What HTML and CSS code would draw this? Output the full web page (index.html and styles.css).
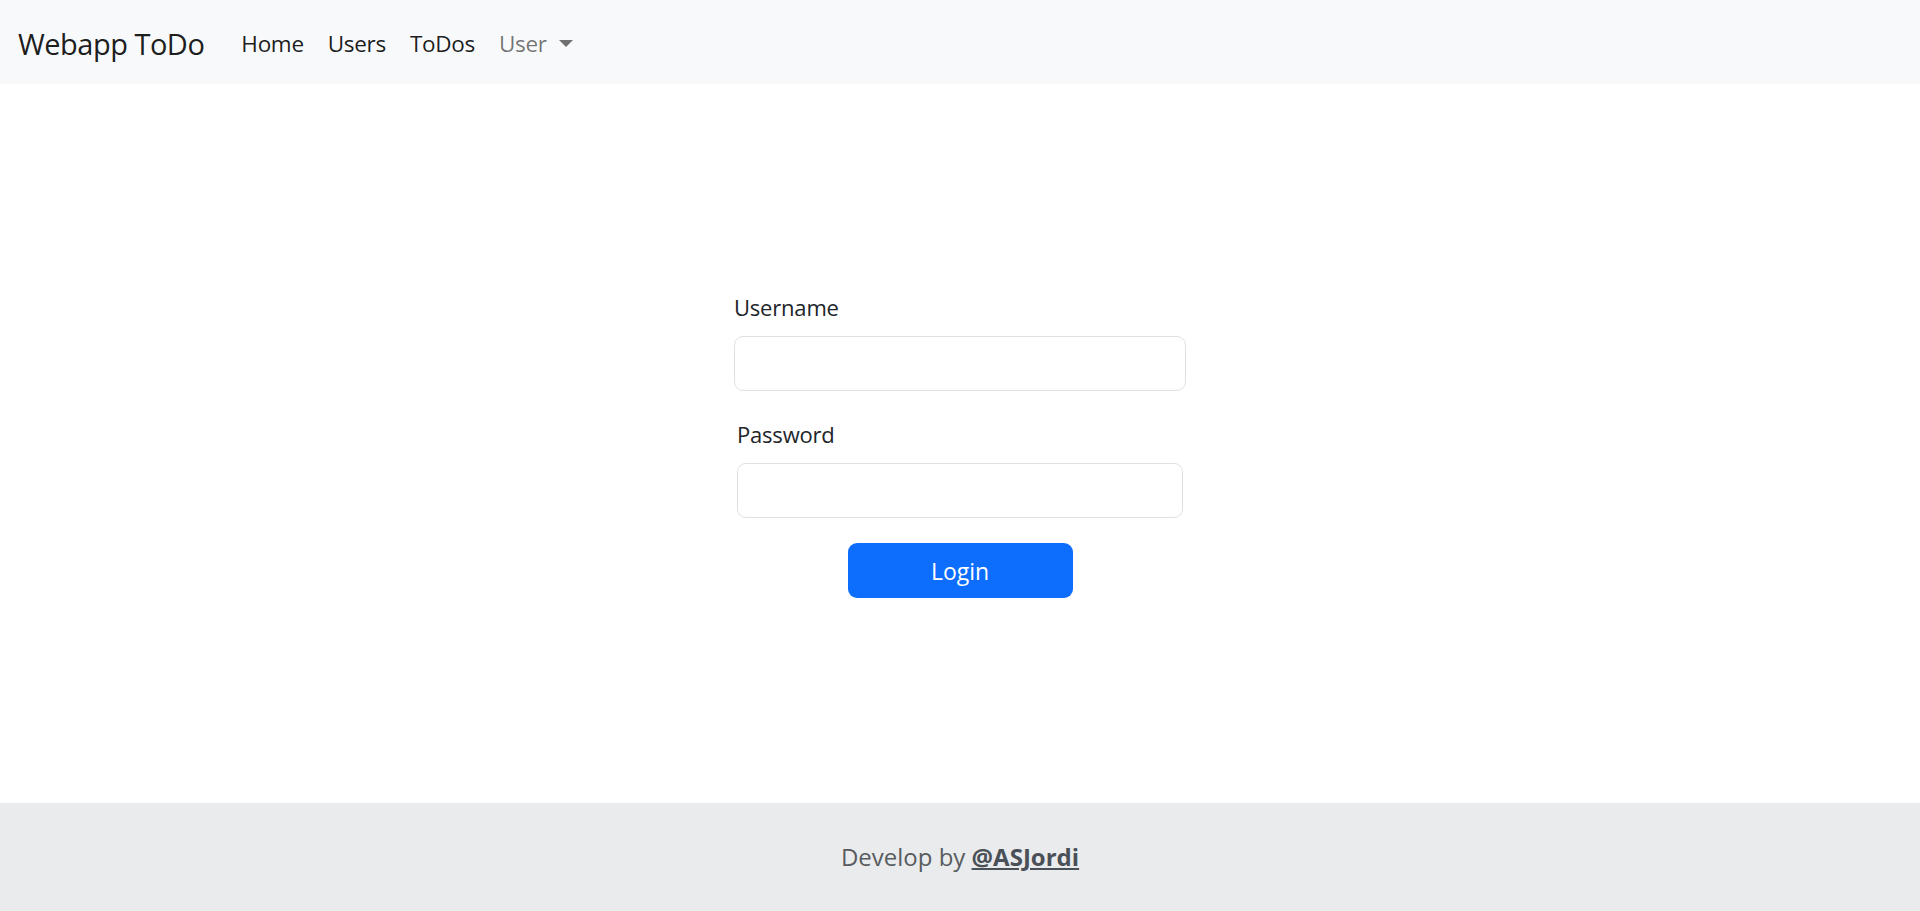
FILE: index.html
```html
<!DOCTYPE html>
<html lang="en">
<head>
<meta charset="utf-8">
<title>Webapp ToDo</title>
<link rel="stylesheet" href="styles.css">
</head>
<body>
<nav class="navbar">
  <a class="brand" href="#">Webapp ToDo</a>
  <ul class="nav">
    <li><a class="nav-link" href="#">Home</a></li>
    <li><a class="nav-link" href="#">Users</a></li>
    <li><a class="nav-link" href="#">ToDos</a></li>
    <li><a class="nav-link muted dropdown" href="#">User</a></li>
  </ul>
</nav>
<main class="main">
  <form class="login">
    <div class="group g1">
      <label class="label" for="u">Username</label>
      <input class="input" id="u" type="text">
    </div>
    <div class="group g2">
      <label class="label" for="p">Password</label>
      <input class="input" id="p" type="password">
    </div>
    <button class="btn" type="button">Login</button>
  </form>
</main>
<footer class="footer">
  <p class="footer-text">Develop by <a class="footer-link" href="#">@ASJordi</a></p>
</footer>
</body>
</html>
```
FILE: styles.css
```css
* { box-sizing: border-box; }
html, body { margin: 0; padding: 0; }
body {
  font-family: "Open Sans", "Noto Sans", sans-serif;
  font-size: 24px;
  line-height: 1.5;
  color: #212529;
  background: #fff;
  min-height: 911px;
  display: flex;
  flex-direction: column;
}
.navbar {
  background: #f8f9fa;
  height: 84px;
  display: flex;
  align-items: center;
  padding: 4px 18px 0;
}
.brand {
  font-size: 29px;
  color: rgba(0,0,0,0.9);
  text-decoration: none;
  margin-right: 25px;
  letter-spacing: -0.5px;
}
.nav {
  list-style: none;
  display: flex;
  margin: 0;
  padding: 0;
}
.nav-link {
  display: block;
  padding: 0 12px;
  font-size: 22.5px;
  color: rgba(0,0,0,0.9);
  text-decoration: none;
  letter-spacing: -0.3px;
}
.nav-link.muted { color: rgba(0,0,0,0.55); }
.dropdown::after {
  content: "";
  display: inline-block;
  margin-left: 12px;
  vertical-align: 5px;
  border-top: 7px solid;
  border-right: 7px solid transparent;
  border-left: 7px solid transparent;
}
.main {
  flex: 1;
  display: flex;
  align-items: center;
  justify-content: center;
}
.login {
  display: flex;
  flex-direction: column;
  align-items: center;
}
.group { display: flex; flex-direction: column; }
.g1 { width: 452px; margin-bottom: 25px; }
.g2 { width: 446px; margin-bottom: 25px; }
.label {
  font-size: 22px;
  line-height: 36px;
  margin-bottom: 11px;
  letter-spacing: -0.2px;
}
.input {
  height: 55px;
  border: 1px solid #dee2e6;
  border-radius: 9px;
  font: inherit;
  padding: 0 18px;
  background: #fff;
}
.btn {
  width: 225px;
  height: 55px;
  background: #0d6efd;
  color: #fff;
  border: 0;
  border-radius: 9px;
  font-family: inherit;
  font-size: 23px;
}
.footer {
  background: #eaebed;
  height: 108px;
  display: flex;
  align-items: center;
  justify-content: center;
}
.footer-text {
  margin: 0;
  font-size: 24px;
  color: #595c5f;
}
.footer-link {
  color: #495057;
  font-weight: 700;
}
```
